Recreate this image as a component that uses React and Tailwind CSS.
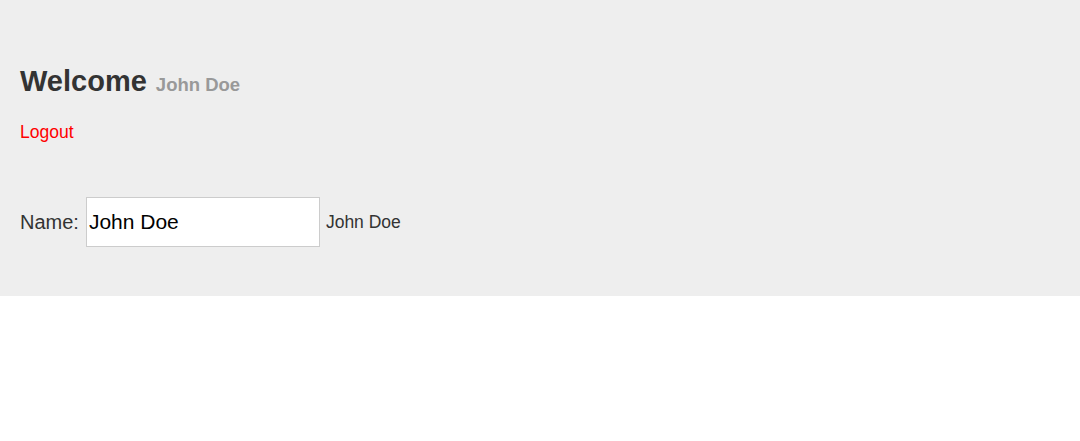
export default function App() {
  return (
    <div className="min-h-screen bg-white font-['Liberation_Sans',Arial,sans-serif]">
      <div className="bg-[#eeeeee] px-5 pt-[63px] pb-[49px]">
        <h1 className="text-[29px] leading-[36px] font-bold text-[#333333]">
          Welcome <small className="ml-[1px] text-[18.5px] font-bold text-[#999999]">John Doe</small>
        </h1>
        <a href="#" className="mt-[17px] block w-fit text-[17.5px] leading-[24px] text-[#ff0000]">
          Logout
        </a>
        <div className="mt-[53px] flex items-center">
          <label className="text-[20px] text-[#333333]">Name:</label>
          <input
            type="text"
            defaultValue="John Doe"
            className="ml-[7px] h-[50px] w-[234px] border border-[#cccccc] bg-white px-[2px] text-[21px] text-black outline-none"
          />
          <span className="ml-[6px] text-[17.5px] text-[#333333]">John Doe</span>
        </div>
      </div>
    </div>
  );
}
